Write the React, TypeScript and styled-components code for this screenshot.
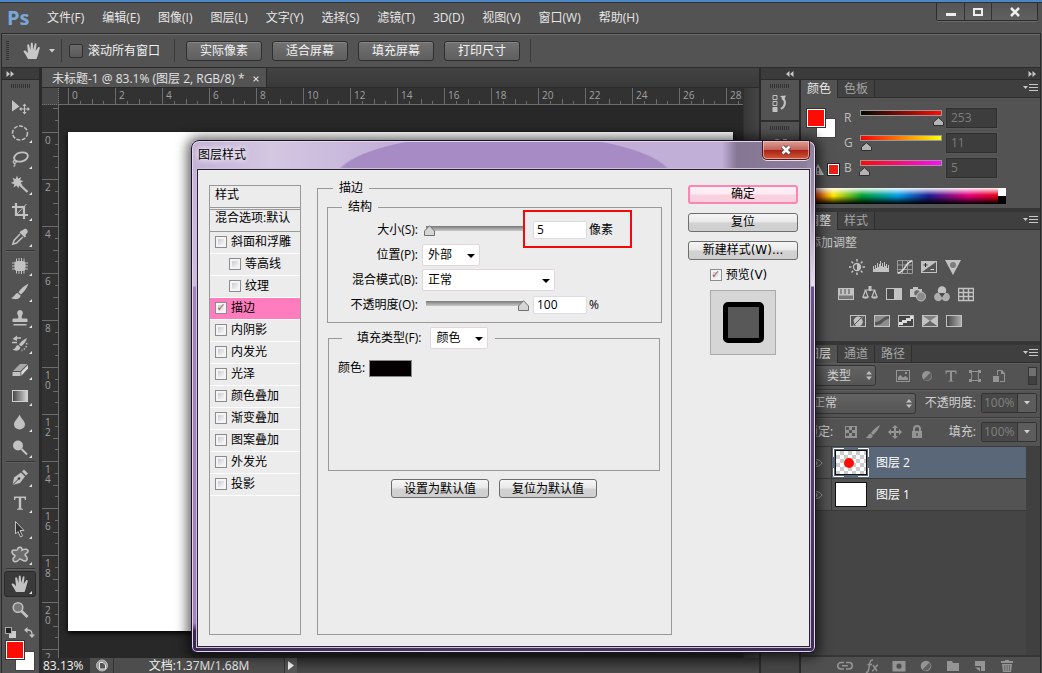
import React from "react";
import styled, { createGlobalStyle, css } from "styled-components";

const uiFont = `"Open Sans", "Noto Sans CJK SC", sans-serif`;

const GlobalStyle = createGlobalStyle`
  *, *::before, *::after { box-sizing: border-box; }
  html, body { margin: 0; background: #282828; }
  body { font: 12px/16px ${uiFont}; color: #d8d8d8; overflow: hidden; }
  button, input, select { font: inherit; color: inherit; margin: 0; padding: 0; }
  svg { display: block; flex: none; }
`;

/* ---------- application frame ---------- */

const App_ = styled.div`
  position: relative;
  display: flex;
  flex-direction: column;
  height: 100vh;
  overflow: hidden;
  background: #535353;
  border-top: 2px solid #4b87c6;
`;

const MenuBar = styled.header`
  display: flex;
  align-items: center;
  flex: none;
  height: 31px;
  padding: 0 4px 0 7px;
  border-top: 1px solid #333;
`;

const Logo = styled.strong`
  width: 40px;
  font: 700 20px/24px "Open Sans", sans-serif;
  color: #7ba7d8;
`;

const MenuList = styled.nav`
  display: flex;
  gap: 18px;
`;

const MenuItem = styled.button`
  border: 0;
  background: none;
  color: #e6e6e6;
  white-space: nowrap;
`;

const WindowButtons = styled.div`
  display: flex;
  align-self: flex-start;
  margin-left: auto;
  border: 1px solid #2c2c2c;
  border-top: 0;
  border-radius: 0 0 2px 2px;
  box-shadow: 0 1px 0 #6a6a6a;
`;

const WindowButton = styled.button<{ $wide?: boolean }>`
  display: grid;
  place-items: center;
  width: ${(p) => (p.$wide ? 46 : 27)}px;
  height: 17px;
  border: 0;
  background: linear-gradient(#555, #606060);
  & + & { border-left: 1px solid #333; }
`;

const OptionsBar = styled.section`
  display: flex;
  align-items: center;
  flex: none;
  height: 35px;
  margin: 0 1px;
  padding-left: 4px;
  border: 1px solid #2c2c2c;
  box-shadow: inset 0 1px 0 #6a6a6a;
`;

const GripV = styled.i`
  width: 3px;
  height: 20px;
  background: repeating-linear-gradient(#333 0 1px, transparent 1px 2px);
`;

const GripH = styled.i`
  display: block;
  width: 20px;
  height: 4px;
  margin: 4px auto 0;
  background: repeating-linear-gradient(90deg, #333 0 1px, transparent 1px 2px);
`;

const BarRule = styled.i`
  width: 1px;
  height: 23px;
  background: #3a3a3a;
`;

const ToolPicker = styled.button`
  display: flex;
  align-items: center;
  gap: 5px;
  width: 50px;
  margin-left: 2px;
  padding-left: 9px;
  border: 0;
  background: none;
`;

const OptionLabel = styled.label`
  display: flex;
  align-items: center;
  gap: 5px;
  margin: 0 14px 0 7px;
  color: #f0f0f0;
`;

const DarkCheck = styled.input`
  appearance: none;
  width: 14px;
  height: 14px;
  border: 1px solid #303030;
  border-radius: 2px;
  background: linear-gradient(#6a6a6a, #5a5a5a);
`;

const OptionButtons = styled.div`
  display: flex;
  gap: 10px;
  margin: 0 10px 0 11px;
`;

const OptionButton = styled.button`
  width: 76px;
  height: 20px;
  border: 1px solid #2e2e2e;
  border-radius: 3px;
  background: linear-gradient(#727272, #5e5e5e);
  box-shadow: inset 0 1px 0 #858585;
  color: #f4f4f4;
  line-height: 17px;
`;

const Workspace = styled.main`
  display: flex;
  flex: 1;
  min-height: 0;
  margin: 0 1px;
  border: solid #2a2a2a;
  border-width: 0 1px;
  background: #2a2a2a;
`;

/* ---------- tool box ---------- */

const ToolColumn = styled.aside`
  display: flex;
  flex-direction: column;
  flex: none;
  width: 37px;
  margin-right: 3px;
  background: #535353;
`;

const CollapseBar = styled.div`
  display: flex;
  align-items: center;
  justify-content: space-between;
  flex: none;
  height: 12px;
  padding: 0 4px;
  border-bottom: 1px solid #2a2a2a;
  background: #3b3b3b;
`;

const DockCollapseBar = styled(CollapseBar)`
  padding-left: 25px;
`;

const ToolList = styled.div`
  display: flex;
  flex-direction: column;
  align-items: center;
  padding: 6px 1px 0 0;
`;

const ToolButton = styled.button<{ $active?: boolean; $menu?: boolean }>`
  position: relative;
  display: grid;
  place-items: center;
  width: 32px;
  height: 26px;
  border: 1px solid transparent;
  border-radius: 3px;
  background: none;
  ${(p) =>
    p.$active &&
    css`
      border-color: #2a2a2a;
      background: #3a3a3a;
    `}
  ${(p) =>
    p.$menu &&
    css`
      &::after {
        content: "";
        position: absolute;
        right: 3px;
        bottom: 2px;
        border: solid transparent;
        border-width: 0 0 3px 3px;
        border-bottom-color: #e4e4e4;
      }
    `}
`;

const ToolRule = styled.i`
  width: 29px;
  height: 3px;
  border-top: 1px solid #363636;
  background: linear-gradient(#606060 1px, transparent 1px);
`;

const SwatchControls = styled.div`
  display: flex;
  justify-content: space-between;
  width: 30px;
  height: 13px;
  margin-top: 4px;
`;

const SwatchPair = styled.div<{ $w: number; $h: number }>`
  position: relative;
  width: ${(p) => p.$w}px;
  height: ${(p) => p.$h}px;
`;

const Swatch = styled.button<{ $color: string; $front?: boolean }>`
  position: absolute;
  width: 20px;
  height: 20px;
  border: 1px solid ${(p) => (p.$front ? "#333" : "#444")};
  background: ${(p) => p.$color};
  ${(p) =>
    p.$front
      ? css`
          left: 0;
          top: 0;
          z-index: 1;
          box-shadow: inset 0 0 0 1px #fff;
        `
      : css`
          right: 0;
          bottom: 0;
        `}
`;

/* ---------- document ---------- */

const DocColumn = styled.section`
  display: flex;
  flex-direction: column;
  flex: 1;
  min-width: 0;
  margin-right: 2px;
  background: #3c3c3c;
`;

const DocTabs = styled.div`
  display: flex;
  flex: none;
  height: 20px;
  border-bottom: 1px solid #2a2a2a;
  background: linear-gradient(#434343, #393939);
`;

const DocTab = styled.div`
  display: flex;
  align-items: center;
  gap: 8px;
  padding: 2px 7px 0 10px;
  border-right: 1px solid #2a2a2a;
  background: #535353;
  color: #e2e2e2;
  white-space: nowrap;
`;

const TabClose = styled.button`
  border: 0;
  background: none;
`;

const DocBody = styled.div`
  display: flex;
  flex: 1;
  min-height: 0;
`;

const DocView = styled.div`
  display: grid;
  grid-template: 17px minmax(0, 1fr) / 17px minmax(0, 1fr);
  flex: 1;
  min-width: 0;
`;

const RulerCorner = styled.div`
  border: 1px dotted #777;
  border-width: 0 1px 1px 0;
  background: #484848;
`;

const tick = "linear-gradient(#6c6c6c, #6c6c6c)";

const RulerH = styled.div`
  display: flex;
  overflow: hidden;
  padding-left: 9px;
  border-bottom: 1px solid #6c6c6c;
  background: #323232;
`;

const MarkH = styled.span`
  flex: none;
  width: 47px;
  padding-left: 4px;
  font-size: 10px;
  line-height: 14px;
  color: #a0a0a0;
  background: ${tick} 0 0 / 1px 16px no-repeat, ${tick} 12px 100% / 1px 3px no-repeat,
    ${tick} 24px 100% / 1px 5px no-repeat, ${tick} 35px 100% / 1px 3px no-repeat;
`;

const RulerV = styled.div`
  overflow: hidden;
  border-right: 1px solid #6c6c6c;
  background: #323232;
`;

const MarkLead = styled.div`
  height: 27px;
  background: ${tick} 100% 3px / 5px 1px no-repeat, ${tick} 100% 15px / 3px 1px no-repeat;
`;

const MarkV = styled.div`
  display: flex;
  flex-direction: column;
  height: 47px;
  padding: 3px 0 0 3px;
  font-size: 10px;
  line-height: 10px;
  color: #a0a0a0;
  background: ${tick} 0 0 / 16px 1px no-repeat, ${tick} 100% 12px / 3px 1px no-repeat,
    ${tick} 100% 24px / 5px 1px no-repeat, ${tick} 100% 35px / 3px 1px no-repeat;
`;

const Pasteboard = styled.div`
  padding: 27px 10px 27px 9px;
  background: #282828;
`;

const Sheet = styled.div`
  height: 100%;
  background: #fff;
  box-shadow: 0 2px 5px #000;
`;

const ScrollTrack = styled.div`
  flex: none;
  width: 16px;
  border-left: 1px solid #303030;
  background: linear-gradient(90deg, #383838, #444);
`;

const StatusBar = styled.footer`
  display: flex;
  align-items: center;
  flex: none;
  height: 15px;
  background: linear-gradient(#333, #4a4a4a);
  color: #f0f0f0;
  white-space: nowrap;
`;

const ZoomField = styled.input`
  width: 48px;
  height: 15px;
  padding-left: 1px;
  border: 0;
  background: #303030;
`;

const StatusIcon = styled.button`
  width: 24px;
  height: 15px;
  padding-left: 5px;
  border: 0;
  border-right: 1px solid #333;
  background: #4d4d4d;
`;

const StatusText = styled.span`
  width: 170px;
  background: #4d4d4d;
  text-align: center;
  line-height: 15px;
`;

const StatusArrow = styled.button`
  display: grid;
  place-items: center;
  width: 13px;
  height: 15px;
  border: 0;
  border-left: 1px solid #333;
  background: #555;
`;

/* ---------- right-hand docks ---------- */

const DockArea = styled.aside`
  display: flex;
  flex-direction: column;
  flex: none;
  width: 279px;
`;

const DockBody = styled.div`
  display: flex;
  flex: 1;
  min-height: 0;
`;

const IconDock = styled.div`
  display: flex;
  flex-direction: column;
  flex: none;
  width: 38px;
  margin-right: 2px;
  background: #454545;
`;

const IconDockGroup = styled.div`
  height: 42px;
  border-bottom: 2px solid #2f2f2f;
  background: #535353;
`;

const DockButton = styled.button`
  display: block;
  margin: 6px auto 0;
  border: 0;
  background: none;
`;

const PanelStack = styled.div`
  display: flex;
  flex-direction: column;
  flex: 1;
  min-width: 0;
`;

const Panel = styled.section<{ $grow?: boolean }>`
  display: flex;
  flex-direction: column;
  flex: ${(p) => (p.$grow ? 1 : "none")};
  min-height: 0;
  & + & { border-top: 4px solid #363636; }
`;

const PanelTabs = styled.div`
  display: flex;
  flex: none;
  height: 18px;
  border-bottom: 1px solid #2f2f2f;
  background: #3f3f3f;
`;

const PanelTab = styled.button<{ $active?: boolean }>`
  width: 37px;
  height: ${(p) => (p.$active ? 18 : 17)}px;
  border: 0;
  border-right: 1px solid #2f2f2f;
  background: ${(p) => (p.$active ? "#535353" : "#424242")};
  color: ${(p) => (p.$active ? "#e8e8e8" : "#a4a4a4")};
  line-height: 16px;
`;

const PanelMenu = styled.button`
  margin: 0 2px 0 auto;
  border: 0;
  background: none;
`;

const ColorBody = styled.div`
  display: flex;
  padding: 7px 0 0 5px;
  background: #535353;
`;

const ColorLeft = styled.div`
  width: 38px;
  padding-top: 3px;
`;

const GamutRow = styled.div`
  display: flex;
  align-items: center;
  gap: 3px;
  height: 14px;
  margin-top: 24px;
  padding-left: 6px;
`;

const GamutSwatch = styled.button`
  width: 13px;
  height: 13px;
  border: 1px solid #222;
  background: #ea2018;
  box-shadow: inset 0 0 0 1px #fff;
`;

const Channel = styled.div`
  display: grid;
  grid-template-columns: 14px 88px 51px;
  align-items: center;
  height: 25px;
  color: #bdbdbd;
`;

const darkThumb = `url("data:image/svg+xml,%3Csvg xmlns='http://www.w3.org/2000/svg' width='11' height='9'%3E%3Cpath d='M5.5 .7L10.500 5V8.500H.5V5Z' fill='%23b4b4b4' stroke='%23303030'/%3E%3C/svg%3E")`;
const lightThumb = `url("data:image/svg+xml,%3Csvg xmlns='http://www.w3.org/2000/svg' width='11' height='11'%3E%3Cpath d='M5.5 .7L10.500 6V10.500H.5V6Z' fill='%23d6d6d6' stroke='%23707070'/%3E%3C/svg%3E")`;

const ChannelSlider = styled.input<{ $from: string; $to: string }>`
  appearance: none;
  width: 87px;
  height: 16px;
  border: 0;
  background: linear-gradient(90deg, ${(p) => p.$from}, ${(p) => p.$to}) 3px 1px / 80px 4px no-repeat,
    linear-gradient(#999, #999) 2px 0 / 82px 6px no-repeat;
  &::-webkit-slider-thumb {
    appearance: none;
    width: 11px;
    height: 9px;
    margin-top: 7px;
    background: ${darkThumb};
  }
`;

const ChannelValue = styled.input`
  width: 51px;
  height: 20px;
  padding-left: 4px;
  border: 1px solid #2f2f2f;
  background: #3d3d3d;
  box-shadow: 0 0 0 1px #585858;
  color: #7c7c7c;
`;

const SpectrumRow = styled.div`
  display: flex;
  height: 28px;
  padding: 8px 34px 4px 8px;
  background: #535353;
`;

const Spectrum = styled.div`
  flex: 1;
  background: linear-gradient(rgba(255, 255, 255, 0.95), rgba(255, 255, 255, 0) 45%, rgba(0, 0, 0, 0) 50%, #000),
    linear-gradient(90deg, #e00010, #ffe600 13%, #00a030 28%, #00a0e8 47%, #1d1d96 63%, #e6007e 84%, #e60012);
`;

const SpectrumEnds = styled.div`
  width: 8px;
  background: linear-gradient(#fff 50%, #000 50%);
`;

const AdjustBody = styled.div`
  height: 111px;
  padding: 5px 0 0 8px;
  background: #535353;
  color: #c4c4c4;
`;

const IconRow = styled.div<{ $first?: boolean; $indent: number }>`
  display: flex;
  gap: 8px;
  height: 16px;
  margin-top: ${(p) => (p.$first ? 8 : 11)}px;
  padding-left: ${(p) => p.$indent}px;
`;

const PlainButton = styled.button`
  display: grid;
  place-items: center;
  width: 16px;
  height: 16px;
  border: 0;
  background: none;
`;

const LayerBar = styled.div<{ $h: number }>`
  display: flex;
  align-items: center;
  flex: none;
  height: ${(p) => p.$h}px;
  padding: 0 3px 1px 5px;
  border-bottom: 1px solid #3c3c3c;
  box-shadow: inset 0 1px 0 #5e5e5e;
  background: #535353;
  color: #d0d0d0;
`;

const DarkSelectBox = styled.span<{ $w: number }>`
  position: relative;
  display: block;
  width: ${(p) => p.$w}px;
  height: 21px;
  svg { position: absolute; right: 4px; top: 6px; pointer-events: none; }
`;

const DarkSelect = styled.select<{ $indent: number }>`
  appearance: none;
  width: 100%;
  height: 21px;
  padding-left: ${(p) => p.$indent}px;
  border: 1px solid #363636;
  border-radius: 3px;
  background: linear-gradient(#636363, #555);
`;

const LayerIcons = styled.div<{ $gap: number; $left: number }>`
  display: flex;
  gap: ${(p) => p.$gap}px;
  margin-left: ${(p) => p.$left}px;
`;

const FilterSwitch = styled.button`
  width: 9px;
  height: 18px;
  margin-left: auto;
  border: 1px solid #363636;
  background: linear-gradient(#707070 50%, #404040 50%);
`;

const FieldLabel = styled.label`
  display: flex;
  align-items: center;
  gap: 5px;
  margin-left: auto;
  white-space: nowrap;
`;

const PercentBox = styled.span`
  display: flex;
  width: 56px;
  height: 20px;
  border: 1px solid #333;
  border-radius: 2px;
`;

const PercentInput = styled.input`
  width: 35px;
  padding-left: 2px;
  border: 0;
  background: #484848;
  color: #808080;
`;

const PercentArrow = styled.button`
  display: grid;
  place-items: center;
  flex: 1;
  border: 0;
  border-left: 1px solid #333;
  background: #5c5c5c;
`;

const LayerList = styled.div`
  flex: 1;
  min-height: 0;
  padding-right: 14px;
  background: linear-gradient(90deg, #454545, #454545) 0 0 / calc(100% - 14px) 100% no-repeat, #404040;
`;

const LayerRow = styled.div<{ $active?: boolean }>`
  display: flex;
  align-items: center;
  height: 32px;
  border-bottom: 1px solid #3a3a3a;
  background: linear-gradient(90deg, #535353 30px, #3a3a3a 30px 31px, ${(p) => (p.$active ? "#5a6779" : "#535353")} 31px);
  color: #fff;
`;

const EyeButton = styled.button`
  width: 30px;
  height: 16px;
  padding-left: 6px;
  border: 0;
  background: none;
`;

const Thumb = styled.span<{ $active?: boolean }>`
  position: relative;
  display: grid;
  place-items: center;
  width: 32px;
  height: 25px;
  margin: 0 9px 0 4px;
  border: 1px solid #111;
  background: ${(p) => (p.$active ? "repeating-conic-gradient(#ccc 0 25%, #fff 0 50%) 0 0 / 8px 8px" : "#fff")};
  svg { position: absolute; left: -3px; top: -3px; }
`;

const LayerActions = styled.footer`
  display: flex;
  align-items: flex-start;
  gap: 11px;
  flex: none;
  height: 18px;
  padding: 1px 0 0 36px;
  border-top: 2px solid #363636;
  background: #4f4f4f;
`;

/* ---------- layer style dialog ---------- */

const Dialog = styled.div`
  position: absolute;
  left: 191px;
  top: 138px;
  z-index: 5;
  display: flex;
  flex-direction: column;
  width: 625px;
  padding: 0 5px 5px;
  border: 1px solid #1c1228;
  border-radius: 8px 8px 6px 6px;
  background: linear-gradient(#c3b2d6, #cdbcde 145px, #a583c2 146px 482px, #3a2850 490px) 0 0 / 8px 100% no-repeat,
    linear-gradient(#8d7f9b, #9d90a8 60px, #e6dfe9 145px, #6a5485 146px, #3f2c58) 100% 0 / 8px 100% no-repeat,
    linear-gradient(90deg, #3b2b52, #4a3863 50%, #3b2b52) 0 100% / 100% 8px no-repeat,
    radial-gradient(ellipse 170px 46px at 312px 38px, #a78bc5 98%, transparent 100%),
    linear-gradient(90deg, #c3b2d6, #d4c7e2 80px, #c2afd8 200px 530px, #857693 545px, #8d7f9b);
  box-shadow: inset 0 0 0 1px #e0d8ea, 0 1px 12px 4px rgba(0, 0, 0, 0.6);
  color: #000;
`;

const TitleBar = styled.div`
  display: flex;
  align-items: flex-start;
  justify-content: space-between;
  height: 28px;
  padding-left: 1px;
`;

const Title = styled.h1`
  margin: 6px 0 0;
  font-size: 12px;
  line-height: 16px;
  font-weight: 400;
  text-shadow: 0 0 6px #fff, 0 0 6px #fff;
`;

const CloseButton = styled.button`
  display: grid;
  place-items: center;
  width: 48px;
  height: 19px;
  border: 1px solid #4a1a1c;
  border-top: 0;
  border-radius: 0 0 5px 5px;
  background: linear-gradient(#dba097, #c4625a 48%, #a81f12 50%, #cf5a3c);
  box-shadow: inset 0 0 0 1px rgba(255, 210, 200, 0.6), 0 1px 0 #e6dcec;
`;

const Client = styled.div`
  display: flex;
  align-items: stretch;
  gap: 16px;
  padding: 10px 11px 11px;
  border: 1px solid #2c2038;
  background: #ececec;
  box-shadow: 0 0 0 1px #cbbfd6;
`;

const StyleList = styled.div`
  flex: none;
  width: 92px;
  margin-top: 5px;
  border: 1px solid #999;
`;

const ListHead = styled.button`
  display: block;
  width: 100%;
  height: 22px;
  padding: 0 0 4px 5px;
  border: 0;
  border-bottom: 1px solid #999;
  background: none;
  text-align: left;
  line-height: 16px;
  & + & {
    height: 23px;
    margin-top: 1px;
    padding-bottom: 5px;
    border-top: 1px solid #999;
  }
`;

const StyleRow = styled.label<{ $active?: boolean; $nested?: boolean }>`
  display: flex;
  align-items: center;
  gap: 4px;
  height: 22px;
  padding: 0 0 1px ${(p) => (p.$nested ? 19 : 5)}px;
  border-bottom: 1px solid #fff;
  background: ${(p) => (p.$active ? "#ff7dbe" : "transparent")};
`;

const LightCheck = styled.input`
  appearance: none;
  display: grid;
  place-items: center;
  flex: none;
  width: 12px;
  height: 12px;
  border: 1px solid #8c8c8c;
  background: linear-gradient(135deg, #c8ccd4, #f6f6f6) 2px 2px / 6px 6px no-repeat #f4f4f4;
  &:checked::after {
    content: "✓";
    font: 700 11px/10px "DejaVu Sans", sans-serif;
    color: #a8635f;
  }
`;

const Group = styled.fieldset<{ $outer?: boolean }>`
  min-width: 0;
  margin: 0;
  border: 1px solid #999;
  padding: ${(p) => (p.$outer ? "3px 9px 0" : "2px 0 5px")};
  ${(p) => p.$outer && css`flex: 1; min-height: 455px;`}
`;

const FillGroup = styled.fieldset`
  min-width: 0;
  min-height: 145px;
  margin: 3px 2px 0 1px;
  padding: 6px 9px;
  border: 1px solid #999;
`;

const Legend = styled.legend<{ $indent: number }>`
  height: 16px;
  margin-left: ${(p) => p.$indent}px;
  padding: 0 6px;
`;

const FillLegend = styled.legend`
  height: 24px;
  margin-left: 4px;
  padding: 0 7px 0 15px;
`;

const Inline = styled.div<{ $gap: number }>`
  display: flex;
  align-items: center;
  gap: ${(p) => p.$gap}px;
  height: 24px;
`;

const Setting = styled.div`
  position: relative;
  display: flex;
  align-items: center;
  height: 25px;
`;

const SettingLabel = styled.label`
  width: 90px;
  margin-right: 4px;
  text-align: right;
  white-space: nowrap;
`;

const Slider = styled.input`
  appearance: none;
  width: 107px;
  height: 14px;
  margin-right: 4px;
  background: linear-gradient(#777, #aaa 60%, #c8c8c8) 4px 3px / 98px 5px no-repeat;
  &::-webkit-slider-thumb {
    appearance: none;
    width: 11px;
    height: 11px;
    margin-top: 2px;
    background: ${lightThumb};
  }
`;

const NumberBox = styled.input`
  width: 54px;
  height: 18px;
  margin-right: 2px;
  padding-left: 3px;
  border: 1px solid #dadde4;
  border-radius: 2px;
  background: #fff;
`;

const Callout = styled.i`
  position: absolute;
  left: 195px;
  top: -7px;
  width: 109px;
  height: 38px;
  border: 2px solid #f00a0a;
  pointer-events: none;
`;

const LightSelectBox = styled.span<{ $w: number }>`
  position: relative;
  display: block;
  width: ${(p) => p.$w}px;
  height: 22px;
  &::after {
    content: "";
    position: absolute;
    right: 5px;
    top: 10px;
    border: 4px solid transparent;
    border-top-color: #000;
    border-bottom: 0;
    pointer-events: none;
  }
`;

const LightSelect = styled.select`
  appearance: none;
  display: block;
  width: 100%;
  height: 22px;
  padding-left: 5px;
  border: 1px solid #e2d6dc;
  border-radius: 2px;
  background: #fff;
`;

const FillSwatch = styled.button`
  width: 43px;
  height: 17px;
  border: 1px solid #888;
  background: #050001;
`;

const ButtonRow = styled.div`
  display: flex;
  justify-content: center;
  gap: 10px;
  margin: 8px 1px 0 0;
`;

const PushButton = styled.button<{ $primary?: boolean; $w: number }>`
  width: ${(p) => p.$w}px;
  height: 19px;
  border: 1px solid #6e6e6e;
  border-radius: 3px;
  background: linear-gradient(#f6f6f6, #e8e8e8 48%, #d2d2d2 52%, #cfcfcf);
  line-height: 17px;
  white-space: nowrap;
  ${(p) =>
    p.$primary &&
    css`
      border: 2px solid #fb86b2;
      background: linear-gradient(#fff0f5, #fdeaf1 48%, #f9d3e0 52%, #f8cfdd);
      line-height: 15px;
    `}
`;

const SideColumn = styled.div`
  display: flex;
  flex-direction: column;
  align-items: center;
  gap: 9px;
  flex: none;
  width: 110px;
  margin-top: 5px;
  font-family: "DejaVu Sans", "Noto Sans CJK SC", sans-serif;
`;

const PreviewLabel = styled.label`
  display: flex;
  align-items: center;
  gap: 4px;
  height: 12px;
  padding-right: 9px;
`;

const PreviewBox = styled.div`
  display: grid;
  place-items: center;
  width: 66px;
  height: 65px;
  border: 1px solid #aaa;
  background: #d6d6d6;
`;

const PreviewShape = styled.div`
  width: 41px;
  height: 41px;
  border: 5px solid #000;
  border-radius: 5px;
  background: #585858;
`;

/* ---------- icons ---------- */

const handPath =
  "M7 20C5.500 17 4 14.500 2.500 12.500C2.500 11 4.500 11 5.500 12.500L7 14.300L6.200 6.200C6.200 4.800 7.800 4.800 8.200 6.200L9.400 11L9.800 4.500C10 3.200 11.600 3.200 11.800 4.500L12.200 11L13.700 5C14.100 3.800 15.600 4.200 15.500 5.500L14.700 12L17 8.500C17.800 7.500 19.200 8.200 18.700 9.500C17.500 13 17 17 15.500 20Z";

const fillIcon = "#c2c2c2";

const Glyph = ({ size = 24, children }: { size?: number; children: React.ReactNode }) => (
  <svg width={size} height={size} viewBox={`0 0 ${size} ${size}`} fill={fillIcon} aria-hidden="true">
    {children}
  </svg>
);

const line = { fill: "none", stroke: fillIcon, strokeWidth: 1.5 };

type Tool = { name: string; menu?: boolean; active?: boolean; icon: React.ReactNode };

const toolGroups: Tool[][] = [
  [
    {
      name: "移动工具",
      icon: (
        <>
          <path d="M4 5L11.500 11.500L4 16.500Z" />
          <path d="M16.500 9.500V18.500M12 14H21" stroke={fillIcon} strokeWidth="1.200" />
          <path d="M16.500 8.500L14.500 11H18.500ZM16.500 19.500L14.500 17H18.500ZM11 14L13.500 12V16ZM22 14L19.500 12V16Z" />
        </>
      ),
    },
    { name: "椭圆选框工具", menu: true, icon: <ellipse cx="12" cy="12" rx="7.500" ry="7" {...line} strokeDasharray="4 1.500" /> },
    {
      name: "套索工具",
      menu: true,
      icon: (
        <>
          <ellipse cx="13" cy="10" rx="7" ry="4.500" transform="rotate(-14 13 10)" {...line} strokeWidth="1.800" />
          <path d="M6.500 13C4 15 5.500 17 7.500 16C9 15 7.500 13 6.200 14M6.500 16.500C7.500 18 6.500 19 5.500 19.500" {...line} strokeWidth="1.200" />
        </>
      ),
    },
    {
      name: "魔棒工具",
      menu: true,
      icon: (
        <>
          <path d="M9 2.500L10.200 5.800L13 4L12.200 7.200L15.500 8L12.700 9.800L14.500 12.500L11.200 12L10.500 15.500L8.500 12.500L5.500 14.500L6.300 11.200L3 10L6 8.200L4.500 5L7.700 6Z" />
          <path d="M11 11L19.500 19" stroke={fillIcon} strokeWidth="2.200" />
        </>
      ),
    },
    {
      name: "裁剪工具",
      menu: true,
      icon: (
        <>
          <path d="M8 4V16H20M4 8H16V20" {...line} strokeWidth="2.200" />
          <path d="M9 15L18.500 5" {...line} strokeWidth="1" />
        </>
      ),
    },
    {
      name: "吸管工具",
      menu: true,
      icon: (
        <>
          <path d="M14 5.500L16.500 4C18 3.200 20.500 5.500 19.500 7.500L17.500 10L18 11.500L16.800 12.500L11.500 7.500L12.500 6.200Z" />
          <path d="M12 9L6 15.500L4.800 19.200L8.500 18L14.800 12" {...line} />
        </>
      ),
    },
  ],
  [
    {
      name: "修补工具",
      menu: true,
      icon: (
        <>
          <rect x="6.500" y="7" width="11" height="10" rx="3" />
          <path d="M8.500 4.500V19.500M11 4V20M13.500 4V20M16 4.500V19.500M4 9H20M4 12H20M4 15H20" stroke={fillIcon} strokeWidth="1" />
        </>
      ),
    },
    {
      name: "画笔工具",
      menu: true,
      icon: <path d="M20.500 3.500C16 6 12.500 9 10.500 12.200L13 14.500C16 12 19 8 20.500 3.500ZM9.800 13C6.500 13.500 7 17 3 18C6 20 12.500 19.500 12.500 15.500Z" />,
    },
    {
      name: "仿制图章工具",
      menu: true,
      icon: <path d="M12 4A3 3 0 0 1 14.500 8.500C13.500 10 13.500 11 14 12.500H18.500C19.500 12.500 19.500 13 19.500 16H4.500C4.500 13 4.500 12.500 5.500 12.500H10C10.500 11 10.500 10 9.500 8.500A3 3 0 0 1 12 4ZM5.500 18H18.500V19.500H5.500Z" />,
    },
    {
      name: "历史记录画笔工具",
      menu: true,
      icon: (
        <>
          <path d="M19 6C15 8 12 10.500 11 12.500L13 14.500C16 12.500 18 9.500 19 6ZM10 13C7.500 13.500 8 17 4.500 17.500C7 19.500 12.500 19 12.300 15.200Z" />
          <path d="M13 6H7M9 10.500H4" {...line} />
          <path d="M4.500 7L9 3.500V9Z" />
          <path d="M18.500 11C19.500 14 17 17.500 13.500 18.500" {...line} strokeDasharray="1.500 1.500" />
        </>
      ),
    },
    {
      name: "橡皮擦工具",
      menu: true,
      icon: (
        <>
          <path d="M12 6H19.500L12.500 13H5Z" fill="#a8a8a8" />
          <path d="M4.500 14H12.500V18H4.500Z" />
          <path d="M13.300 13.600L20 7V10.500L13.300 17.800Z" fill="#dcdcdc" />
        </>
      ),
    },
    {
      name: "渐变工具",
      menu: true,
      icon: (
        <>
          <defs>
            <linearGradient id="toolGradient">
              <stop stopColor="#444" />
              <stop offset="1" stopColor="#d8d8d8" />
            </linearGradient>
          </defs>
          <rect x="4.500" y="6.500" width="15" height="11" fill="url(#toolGradient)" stroke="#d0d0d0" />
        </>
      ),
    },
    { name: "模糊工具", menu: true, icon: <path d="M11.500 4.500C13 8.500 17 11 17 14.500A5.500 5 0 0 1 6 14.500C6 11 10 8.500 11.500 4.500Z" /> },
    {
      name: "减淡工具",
      menu: true,
      icon: (
        <>
          <circle cx="10" cy="9.500" r="5" />
          <path d="M13.500 13L19 18.500" stroke={fillIcon} strokeWidth="2" />
        </>
      ),
    },
  ],
  [
    {
      name: "钢笔工具",
      menu: true,
      icon: (
        <>
          <path d="M4.500 20L6 12.500L13 7.500L17 11.500L12 18Z" />
          <path d="M4.500 20L10.500 14" stroke="#444" />
          <circle cx="11" cy="13.500" r="1.300" fill="#444" />
          <path d="M14 6.500L16 4.500L20 8.500L18 10.500Z" />
        </>
      ),
    },
    { name: "文字工具", menu: true, icon: <path d="M6 5.500H18V9H17L16.300 7H13.200V17.200L15 18V18.700H9V18L10.800 17.200V7H7.700L7 9H6Z" /> },
    {
      name: "路径选择工具",
      menu: true,
      icon: <path d="M7.500 4.500L16 13.500H12L14.500 19L12.500 20L10 14.500L7.500 17Z" fill="#333" stroke={fillIcon} />,
    },
    {
      name: "自定形状工具",
      menu: true,
      icon: (
        <path
          d="M9.500 6.500C10 3.500 14.500 3.500 14 7C16.500 5.500 20.500 6 20 8.500C19.500 10.500 16.500 10.500 17 12C19.500 13.500 20 17.500 17.500 18C15 18.500 13 15.500 11.500 16C9.500 19.500 4.500 19.500 5 16C5.500 14 7.500 14 7 12.500C3.500 11 3 8 5 7.200C7 6.500 8.500 8.500 9.500 6.500Z"
          fill="#6c6c6c"
          stroke={fillIcon}
          strokeWidth="1.500"
        />
      ),
    },
  ],
  [
    { name: "抓手工具", menu: true, active: true, icon: <path d={handPath} transform="translate(1 0)" /> },
    {
      name: "缩放工具",
      icon: (
        <>
          <circle cx="10" cy="9.500" r="4.800" fill="#777" stroke={fillIcon} strokeWidth="1.500" />
          <path d="M13.500 13L19.500 19" stroke={fillIcon} strokeWidth="2.800" />
        </>
      ),
    },
  ],
];

const adjust1: [string, React.ReactNode][] = [
  [
    "亮度/对比度",
    <>
      <circle cx="8" cy="8" r="3.500" fill="none" stroke={fillIcon} strokeWidth="1.300" />
      <path d="M8 4.500A3.500 3.500 0 0 1 8 11.500Z" />
      <path d="M8 0V2.500M8 13.500V16M0 8H2.500M13.500 8H16M2.500 2.500L4.200 4.200M11.800 11.800L13.500 13.500M13.500 2.500L11.800 4.200M4.200 11.800L2.500 13.500" {...line} />
    </>,
  ],
  ["色阶", <path d="M0 13V7H1V10H2V6H3V9H4V4H5V8H6V5H7V2H8V7H9V4H10V8H11V3H12V7H13V5H14V9H15V6H16V13Z" />],
  [
    "曲线",
    <>
      <path d="M.5 1.500H15.500V14.500H.5ZM5.500 2V14M10.500 2V14M1 6H15M1 10.500H15" {...line} stroke="#9a9a9a" strokeWidth="1" />
      <path d="M1 14C9 13 7 4 15 2" {...line} stroke="#dcdcdc" />
    </>,
  ],
  [
    "曝光度",
    <>
      <rect x="0" y="2" width="16" height="12" />
      <path d="M1 13L15 3V13Z" fill="#555" />
      <path d="M2.500 6H6.500M4.500 4V8" stroke="#333" />
      <path d="M9.500 10.500H13" stroke="#ddd" />
    </>,
  ],
  [
    "自然饱和度",
    <>
      <path d="M0 1H16L8 16Z" />
      <circle cx="8" cy="6" r="3" fill="#7c7c7c" />
    </>,
  ],
];

const adjust2: [string, React.ReactNode][] = [
  [
    "色相/饱和度",
    <>
      <rect x="0" y="2" width="16" height="12" />
      <path d="M3 3V8M7 3V8M11 3V8" stroke="#888" strokeWidth="2" />
      <path d="M1 9.500H15V13H1Z" fill="#777" />
    </>,
  ],
  [
    "色彩平衡",
    <>
      <path d="M2.500 4H13.500M8 1V5M3.500 4L1 11M3.500 4L6 11M12.500 4L10 11M12.500 4L15 11" {...line} strokeWidth="1.200" />
      <path d="M0 10.500H7C6.500 13.500 .5 13.500 0 10.500ZM9 10.500H16C15.500 13.500 9.500 13.500 9 10.500ZM6.500 0H9.500V5H6.500Z" />
    </>,
  ],
  [
    "黑白",
    <>
      <rect x=".5" y="2.500" width="15" height="11" fill="#4a4a4a" stroke={fillIcon} />
      <rect x="8" y="2" width="8" height="12" />
    </>,
  ],
  [
    "照片滤镜",
    <>
      <path d="M0 3H3V1H8V3H12V11H0Z" />
      <circle cx="7" cy="7" r="2.500" fill="#666" stroke="#777" />
      <circle cx="11" cy="10.500" r="4.500" fill="#8a8a8a" stroke={fillIcon} />
    </>,
  ],
  [
    "通道混合器",
    <>
      <circle cx="8" cy="4.500" r="4.200" />
      <circle cx="4.300" cy="11" r="4.200" fill="#adadad" />
      <circle cx="11.700" cy="11" r="4.200" fill="#adadad" />
      <path d="M5 7H11L8 11.500Z" fill="#4a4a4a" />
    </>,
  ],
  ["颜色查找", <path d="M.5 2.500H15.500V14.500H.5ZM5.500 2V14M10.500 2V14M1 6.500H15M1 10.500H15" {...line} />],
];

const adjust3: [string, React.ReactNode][] = [
  [
    "反相",
    <>
      <rect x=".5" y="2.500" width="15" height="11" fill="#555" stroke={fillIcon} />
      <path d="M14 3L11.500 5.500A4.500 4.500 0 0 1 5 12L2.500 13L4.500 10.500A4.500 4.500 0 0 1 11 4.500Z" />
      <path d="M12 4L4 12" stroke="#555" />
    </>,
  ],
  [
    "色调分离",
    <>
      <rect x=".5" y="2.500" width="15" height="11" fill="#8d8d8d" stroke={fillIcon} />
      <path d="M1 9C8 9 8 3 15 3V6C9 6 9 13 1 12Z" fill="#555" />
    </>,
  ],
  [
    "阈值",
    <>
      <rect x=".5" y="2.500" width="15" height="11" fill="#444" stroke={fillIcon} />
      <path d="M1 9H4V7H8V5H12V3H15V6H13V8H9V10H5V12H1Z" fill="#ddd" />
    </>,
  ],
  [
    "可选颜色",
    <>
      <rect x=".5" y="2.500" width="15" height="11" fill="#808080" stroke={fillIcon} />
      <path d="M1 3L8 8L1 13ZM15 3L8 8L15 13Z" />
      <path d="M1 13L8 8L15 13Z" fill="#666" />
    </>,
  ],
  [
    "渐变映射",
    <>
      <defs>
        <linearGradient id="mapGradient">
          <stop stopColor="#444" />
          <stop offset="1" stopColor="#b0b0b0" />
        </linearGradient>
      </defs>
      <rect x=".5" y="2.500" width="15" height="11" fill="url(#mapGradient)" stroke={fillIcon} />
    </>,
  ],
];

const dim = "#949494";

const filterIcons: [string, React.ReactNode][] = [
  ["像素图层", <path d="M1 2H15V14H1ZM2 3V13H14V3ZM3 12V9L5.500 7L8 9.500L10.500 8L13 10V12ZM10 4H12V6H10Z" fillRule="evenodd" />],
  [
    "调整图层",
    <>
      <circle cx="8" cy="8" r="5" />
      <path d="M4.500 11.500A5 5 0 0 0 11.500 4.500Z" fill="#606060" />
    </>,
  ],
  ["文字图层", <path d="M2.500 2.500H13.500V6H12.700L12 4H9V12.500L10.500 13V13.500H5.500V13L7 12.500V4H4L3.300 6H2.500Z" />],
  [
    "形状图层",
    <>
      <path d="M4 3.500H12M4 12.500H12M4 4C5 7 5 9 4 12M12 4C11 7 11 9 12 12" fill="none" stroke={dim} />
      <path d="M2 2H5V5H2ZM11 2H14V5H11ZM2 11H5V14H2ZM11 11H14V14H11Z" />
    </>,
  ],
  ["智能对象", <path d="M6 2H11L14 5V14H9V13H13V6H10V3H7V7H6ZM2 8H8V14H2Z" />],
];

const lockIcons: [string, React.ReactNode][] = [
  ["锁定透明像素", <path d="M2 2H14V14H2ZM3 3V6H6V3ZM9 3V6H12V3ZM6 6V9H9V6ZM3 9V12H6V9ZM9 9V12H12V9Z" fillRule="evenodd" />],
  ["锁定图像像素", <path d="M15 1C11 3 8 6 6 9L8 11C11 8 14 5 15 1ZM5.500 9.500C3 10 3.500 13 .5 13.500C3 15 8 14.500 7.700 11.500Z" />],
  ["锁定位置", <path d="M8 1L11 4H9V7H12V5L15 8L12 11V9H9V12H11L8 15L5 12H7V9H4V11L1 8L4 5V7H7V4H5Z" />],
  ["锁定全部", <path d="M3 7H4V5A4 4 0 0 1 12 5V7H13V14H3ZM6 7H10V5A2 2 0 0 0 6 5ZM7.300 9V12H8.700V9Z" fillRule="evenodd" />],
];

const actionIcons: [string, React.ReactNode][] = [
  ["链接图层", <path d="M7 4.500H4A3.200 3.200 0 0 0 4 11H7M9 4.500H12A3.200 3.200 0 0 1 12 11H9M5 7.700H11" fill="none" stroke={dim} strokeWidth="1.600" />],
  [
    "图层样式",
    <path d="M9 2C6.500 1.500 6 4 5.500 7L4.500 12C4 14.500 3 14.500 2 14M3.500 6.500H8M9 7L13 13M14 7C11.500 7 10.500 13 8 13" fill="none" stroke={dim} strokeWidth="1.400" />,
  ],
  ["图层蒙版", <path d="M1.500 3H14.500V13.500H1.500ZM8 5.500A2.700 2.700 0 1 0 8.010 5.500Z" fillRule="evenodd" />],
  [
    "调整图层",
    <>
      <circle cx="8" cy="8" r="5.300" />
      <path d="M4.500 11.500A5 5 0 0 0 11.500 4.500Z" fill="#606060" />
    </>,
  ],
  ["新建组", <path d="M2 3H7L8 5H14V13H2Z" />],
  ["新建图层", <path d="M3 3H13V13H9V8H3ZM3 9.500H8V13.500Z" />],
  ["删除图层", <path d="M6 2H10V3H14V5H2V3H6ZM3 6H13L12 14H4ZM5.500 7V13H6.200V7ZM7.700 7V13H8.400V7ZM9.900 7V13H10.600V7Z" fillRule="evenodd" />],
];

const SmallIcons = ({ items, color = fillIcon }: { items: [string, React.ReactNode][]; color?: string }) => (
  <>
    {items.map(([name, icon]) => (
      <PlainButton key={name} aria-label={name}>
        <svg width="16" height="16" viewBox="0 0 16 16" fill={color} aria-hidden="true">
          {icon}
        </svg>
      </PlainButton>
    ))}
  </>
);

const DoubleArrow = ({ left }: { left?: boolean }) => (
  <svg width="8" height="6" viewBox="0 0 8 6" fill="#c8c8c8" aria-hidden="true">
    <path d={left ? "M3.500 0V6L0 3ZM7.500 0V6L4 3Z" : "M.5 0V6L4 3ZM4.500 0V6L8 3Z"} />
  </svg>
);

const DownArrow = () => (
  <svg width="6" height="4" viewBox="0 0 6 4" fill="#d0d0d0" aria-hidden="true">
    <path d="M0 0H6L3 3.500Z" />
  </svg>
);

const UpDown = () => (
  <svg width="6" height="9" viewBox="0 0 6 9" fill="#c0c0c0" aria-hidden="true">
    <path d="M3 0L6 3.500H0ZM3 9L0 5.500H6Z" />
  </svg>
);

const Cross = ({ size, width, color }: { size: number; width: number; color: string }) => (
  <svg width={size} height={size} viewBox="0 0 10 10" aria-hidden="true">
    <path d="M1 1L9 9M9 1L1 9" stroke={color} strokeWidth={width} />
  </svg>
);

/* ---------- data ---------- */

const menus = ["文件(F)", "编辑(E)", "图像(I)", "图层(L)", "文字(Y)", "选择(S)", "滤镜(T)", "3D(D)", "视图(V)", "窗口(W)", "帮助(H)"];
const hMarks = Array.from({ length: 15 }, (_, i) => i * 2);
const vMarks = Array.from({ length: 12 }, (_, i) => i * 2);

const channels = [
  { name: "R", value: 253, from: "#000b05", to: "#ff0b05" },
  { name: "G", value: 11, from: "#fd0005", to: "#fdff05" },
  { name: "B", value: 5, from: "#fd0b00", to: "#fd0bff" },
];

const effects = [
  { name: "斜面和浮雕" },
  { name: "等高线", nested: true },
  { name: "纹理", nested: true },
  { name: "描边", on: true },
  { name: "内阴影" },
  { name: "内发光" },
  { name: "光泽" },
  { name: "颜色叠加" },
  { name: "渐变叠加" },
  { name: "图案叠加" },
  { name: "外发光" },
  { name: "投影" },
];

/* ---------- sections ---------- */

const PanelHeader = ({ tabs }: { tabs: string[] }) => (
  <PanelTabs>
    {tabs.map((t, i) => (
      <PanelTab key={t} $active={i === 0}>
        {t}
      </PanelTab>
    ))}
    <PanelMenu aria-label="面板菜单">
      <svg width="15" height="9" viewBox="0 0 15 9" aria-hidden="true">
        <path d="M0 2H5L2.500 5Z" fill="#c8c8c8" />
        <path d="M6 .5H15M6 3.500H15M6 6.500H15" stroke="#c8c8c8" />
      </svg>
    </PanelMenu>
  </PanelTabs>
);

const Toolbox = () => (
  <ToolColumn>
    <CollapseBar>
      <DoubleArrow />
    </CollapseBar>
    <GripH />
    <ToolList>
      {toolGroups.map((group, g) => (
        <React.Fragment key={g}>
          {g > 0 && <ToolRule />}
          {group.map((t) => (
            <ToolButton key={t.name} aria-label={t.name} $menu={t.menu} $active={t.active}>
              <Glyph>{t.icon}</Glyph>
            </ToolButton>
          ))}
        </React.Fragment>
      ))}
      <SwatchControls>
        <svg width="11" height="11" viewBox="0 0 11 11" aria-hidden="true">
          <rect x="4" y="4" width="7" height="7" fill="#ccc" />
          <rect x=".5" y=".5" width="6" height="6" fill="#222" stroke="#aaa" />
        </svg>
        <svg width="11" height="11" viewBox="0 0 11 11" fill={fillIcon} aria-hidden="true">
          <path d="M3 3C7 3 8 4 8 8" fill="none" stroke={fillIcon} strokeWidth="1.300" />
          <path d="M0 3L3.500 0V6ZM8 11L5 7.500H11Z" />
        </svg>
      </SwatchControls>
      <SwatchPair $w={30} $h={31}>
        <Swatch $front $color="#fd0b05" aria-label="前景色" />
        <Swatch $color="#fff" aria-label="背景色" />
      </SwatchPair>
    </ToolList>
  </ToolColumn>
);

const DocumentArea = () => (
  <DocColumn>
    <DocTabs>
      <DocTab>
        <span>未标题-1 @ 83.1% (图层 2, RGB/8) *</span>
        <TabClose aria-label="关闭文档">
          <Cross size={6} width={2} color="#ddd" />
        </TabClose>
      </DocTab>
    </DocTabs>
    <DocBody>
      <DocView>
        <RulerCorner />
        <RulerH>
          {hMarks.map((m) => (
            <MarkH key={m}>{m}</MarkH>
          ))}
        </RulerH>
        <RulerV>
          <MarkLead />
          {vMarks.map((m) => (
            <MarkV key={m}>
              {String(m)
                .split("")
                .map((d, i) => (
                  <span key={i}>{d}</span>
                ))}
            </MarkV>
          ))}
        </RulerV>
        <Pasteboard>
          <Sheet />
        </Pasteboard>
      </DocView>
      <ScrollTrack />
    </DocBody>
    <StatusBar>
      <ZoomField aria-label="缩放比例" defaultValue="83.13%" />
      <StatusIcon aria-label="共享">
        <svg width="14" height="13" viewBox="0 0 14 13" aria-hidden="true">
          <circle cx="7" cy="6.500" r="5.500" fill="#999" stroke="#bbb" />
          <path d="M4.500 3.500H8L10.500 6V10H4.500Z" fill="#555" stroke="#e4e4e4" />
        </svg>
      </StatusIcon>
      <StatusText>文档:1.37M/1.68M</StatusText>
      <StatusArrow aria-label="状态菜单">
        <svg width="6" height="9" viewBox="0 0 6 9" aria-hidden="true">
          <path d="M0 0L6 4.500L0 9Z" fill="#eee" />
        </svg>
      </StatusArrow>
    </StatusBar>
  </DocColumn>
);

const ColorPanel = () => (
  <Panel>
    <PanelHeader tabs={["颜色", "色板"]} />
    <ColorBody>
      <ColorLeft>
        <SwatchPair $w={30} $h={30}>
          <Swatch $front $color="#fd0b05" aria-label="前景色" />
          <Swatch $color="#fff" aria-label="背景色" />
        </SwatchPair>
        <GamutRow>
          <svg width="12" height="11" viewBox="0 0 12 11" aria-hidden="true">
            <path d="M6 0L12 11H0Z" fill="#c4c4c4" />
            <path d="M6 4V7.500M6 8.500V10" stroke="#333" strokeWidth="1.500" />
          </svg>
          <GamutSwatch aria-label="色域内颜色" />
        </GamutRow>
      </ColorLeft>
      <div>
        {channels.map((c) => (
          <Channel key={c.name}>
            <label htmlFor={`ch-${c.name}`}>{c.name}</label>
            <ChannelSlider
              id={`ch-${c.name}`}
              type="range"
              min={0}
              max={255}
              defaultValue={c.value}
              $from={c.from}
              $to={c.to}
            />
            <ChannelValue aria-label={`${c.name} 值`} defaultValue={c.value} />
          </Channel>
        ))}
      </div>
    </ColorBody>
    <SpectrumRow>
      <Spectrum />
      <SpectrumEnds />
    </SpectrumRow>
  </Panel>
);

const AdjustPanel = () => (
  <Panel>
    <PanelHeader tabs={["调整", "样式"]} />
    <AdjustBody>
      添加调整
      <IconRow $first $indent={40}>
        <SmallIcons items={adjust1} />
      </IconRow>
      <IconRow $indent={29}>
        <SmallIcons items={adjust2} />
      </IconRow>
      <IconRow $indent={41}>
        <SmallIcons items={adjust3} />
      </IconRow>
    </AdjustBody>
  </Panel>
);

const PercentField = ({ label, name }: { label: string; name: string }) => (
  <FieldLabel>
    {label}
    <PercentBox>
      <PercentInput aria-label={name} defaultValue="100%" />
      <PercentArrow aria-label={`${name}滑块`}>
        <DownArrow />
      </PercentArrow>
    </PercentBox>
  </FieldLabel>
);

const Eye = () => (
  <svg width="16" height="10" viewBox="0 0 16 10" aria-hidden="true">
    <path d="M1 5C4 0 12 0 15 5C12 10 4 10 1 5Z" fill="none" stroke="#aaa" />
    <circle cx="8" cy="5" r="2.500" fill="#aaa" />
  </svg>
);

const LayersPanel = () => (
  <Panel $grow>
    <PanelHeader tabs={["图层", "通道", "路径"]} />
    <LayerBar $h={27}>
      <DarkSelectBox $w={70}>
        <DarkSelect $indent={20} aria-label="筛选类型" defaultValue="类型">
          <option>类型</option>
        </DarkSelect>
        <UpDown />
      </DarkSelectBox>
      <LayerIcons $gap={8} $left={19}>
        <SmallIcons items={filterIcons} color={dim} />
      </LayerIcons>
      <FilterSwitch aria-label="打开或关闭图层过滤" />
    </LayerBar>
    <LayerBar $h={28}>
      <DarkSelectBox $w={110}>
        <DarkSelect $indent={6} aria-label="图层混合模式" defaultValue="正常">
          <option>正常</option>
        </DarkSelect>
        <UpDown />
      </DarkSelectBox>
      <PercentField label="不透明度:" name="不透明度" />
    </LayerBar>
    <LayerBar $h={29}>
      <span>锁定:</span>
      <LayerIcons $gap={6} $left={10}>
        <SmallIcons items={lockIcons} color={dim} />
      </LayerIcons>
      <PercentField label="填充:" name="填充" />
    </LayerBar>
    <LayerList>
      <LayerRow $active>
        <EyeButton aria-label="隐藏图层 2">
          <Eye />
        </EyeButton>
        <Thumb $active>
          <svg width="36" height="29" viewBox="0 0 36 29" aria-hidden="true">
            <circle cx="16" cy="15" r="5" fill="#fd0b05" />
            <path d="M.5 9V.5H11M25 .5H35.500V9M35.500 20V28.500H25M11 28.500H.5V20" fill="none" stroke="#fff" />
          </svg>
        </Thumb>
        图层 2
      </LayerRow>
      <LayerRow>
        <EyeButton aria-label="隐藏图层 1">
          <Eye />
        </EyeButton>
        <Thumb />
        图层 1
      </LayerRow>
    </LayerList>
    <LayerActions>
      <SmallIcons items={actionIcons} color={dim} />
    </LayerActions>
  </Panel>
);

const LayerStyleDialog = () => (
  <Dialog role="dialog" aria-labelledby="dialog-title">
    <TitleBar>
      <Title id="dialog-title">图层样式</Title>
      <CloseButton aria-label="关闭">
        <svg width="12" height="10" viewBox="0 0 12 10" aria-hidden="true">
          <path d="M2.500 1.500L9.500 8.500M9.500 1.500L2.500 8.500" stroke="#4a3a48" strokeWidth="4" />
          <path d="M2.500 1.500L9.500 8.500M9.500 1.500L2.500 8.500" stroke="#fff" strokeWidth="2.500" />
        </svg>
      </CloseButton>
    </TitleBar>
    <Client>
      <StyleList>
        <ListHead>样式</ListHead>
        <ListHead>混合选项:默认</ListHead>
        {effects.map((e) => (
          <StyleRow key={e.name} $active={e.on} $nested={e.nested}>
            <LightCheck type="checkbox" defaultChecked={!!e.on} />
            {e.name}
          </StyleRow>
        ))}
      </StyleList>

      <Group $outer>
        <Legend $indent={6}>描边</Legend>
        <Group>
          <Legend $indent={14}>结构</Legend>
          <Setting>
            <SettingLabel htmlFor="size">大小(S):</SettingLabel>
            <Slider id="size" type="range" min={1} max={250} defaultValue={5} />
            <NumberBox aria-label="大小" defaultValue="5" />
            像素
            <Callout />
          </Setting>
          <Setting>
            <SettingLabel htmlFor="position">位置(P):</SettingLabel>
            <LightSelectBox $w={58}>
              <LightSelect id="position">
                <option>外部</option>
              </LightSelect>
            </LightSelectBox>
          </Setting>
          <Setting>
            <SettingLabel htmlFor="blend">混合模式(B):</SettingLabel>
            <LightSelectBox $w={133}>
              <LightSelect id="blend">
                <option>正常</option>
              </LightSelect>
            </LightSelectBox>
          </Setting>
          <Setting>
            <SettingLabel htmlFor="opacity">不透明度(O):</SettingLabel>
            <Slider id="opacity" type="range" min={0} max={100} defaultValue={100} />
            <NumberBox aria-label="不透明度" defaultValue="100" />%
          </Setting>
        </Group>
        <FillGroup>
          <FillLegend>
            <Inline $gap={9}>
              <label htmlFor="fill">填充类型(F):</label>
              <LightSelectBox $w={58}>
                <LightSelect id="fill">
                  <option>颜色</option>
                </LightSelect>
              </LightSelectBox>
            </Inline>
          </FillLegend>
          <Inline $gap={4}>
            <span id="fill-color">颜色:</span>
            <FillSwatch aria-labelledby="fill-color" />
          </Inline>
        </FillGroup>
        <ButtonRow>
          <PushButton $w={98}>设置为默认值</PushButton>
          <PushButton $w={98}>复位为默认值</PushButton>
        </ButtonRow>
      </Group>

      <SideColumn>
        <PushButton $w={110} $primary>
          确定
        </PushButton>
        <PushButton $w={110}>复位</PushButton>
        <PushButton $w={110}>新建样式(W)...</PushButton>
        <PreviewLabel>
          <LightCheck type="checkbox" defaultChecked />
          预览(V)
        </PreviewLabel>
        <PreviewBox>
          <PreviewShape />
        </PreviewBox>
      </SideColumn>
    </Client>
  </Dialog>
);

export default function App() {
  return (
    <App_>
      <GlobalStyle />
      <MenuBar>
        <Logo>Ps</Logo>
        <MenuList>
          {menus.map((m) => (
            <MenuItem key={m}>{m}</MenuItem>
          ))}
        </MenuList>
        <WindowButtons>
          <WindowButton aria-label="最小化">
            <svg width="10" height="10" viewBox="0 0 10 10" aria-hidden="true">
              <path d="M0 6H10V9H0Z" fill="#eee" />
            </svg>
          </WindowButton>
          <WindowButton aria-label="最大化">
            <svg width="10" height="8" viewBox="0 0 10 8" aria-hidden="true">
              <rect x="1" y="1" width="8" height="6" fill="none" stroke="#eee" strokeWidth="2" />
            </svg>
          </WindowButton>
          <WindowButton aria-label="关闭" $wide>
            <Cross size={10} width={2.5} color="#eee" />
          </WindowButton>
        </WindowButtons>
      </MenuBar>
      <OptionsBar>
        <GripV />
        <ToolPicker aria-label="抓手工具">
          <svg width="24" height="24" viewBox="0 0 24 24" fill="#c8c8c8" aria-hidden="true">
            <path d={handPath} transform="translate(1 0)" />
          </svg>
          <DownArrow />
        </ToolPicker>
        <BarRule />
        <OptionLabel>
          <DarkCheck type="checkbox" />
          滚动所有窗口
        </OptionLabel>
        <BarRule />
        <OptionButtons>
          {["实际像素", "适合屏幕", "填充屏幕", "打印尺寸"].map((b) => (
            <OptionButton key={b}>{b}</OptionButton>
          ))}
        </OptionButtons>
        <BarRule />
      </OptionsBar>
      <Workspace>
        <Toolbox />
        <DocumentArea />
        <DockArea>
          <DockCollapseBar>
            <DoubleArrow left />
            <DoubleArrow />
          </DockCollapseBar>
          <DockBody>
            <IconDock>
              <IconDockGroup>
                <GripH />
                <DockButton aria-label="历史记录">
                  <svg width="16" height="18" viewBox="0 0 16 18" aria-hidden="true">
                    <path d="M1 1.500H5V5.500H1ZM1 7.500H5V11.500H1Z" fill="none" stroke={fillIcon} />
                    <path d="M.5 13H5.500V18H.5ZM8 2L14 1.500L12 6Z" fill={fillIcon} />
                    <path d="M10 4C14 6 14 12 9 15" fill="none" stroke={fillIcon} strokeWidth="2" />
                  </svg>
                </DockButton>
              </IconDockGroup>
              <IconDockGroup>
                <GripH />
                <DockButton aria-label="属性">
                  <svg width="16" height="18" viewBox="0 0 16 18" fill={fillIcon} aria-hidden="true">
                    <path d="M1 6C2 2 8 2 9 6ZM11 3H15V18H11Z" />
                  </svg>
                </DockButton>
              </IconDockGroup>
            </IconDock>
            <PanelStack>
              <ColorPanel />
              <AdjustPanel />
              <LayersPanel />
            </PanelStack>
          </DockBody>
        </DockArea>
      </Workspace>
      <LayerStyleDialog />
    </App_>
  );
}
